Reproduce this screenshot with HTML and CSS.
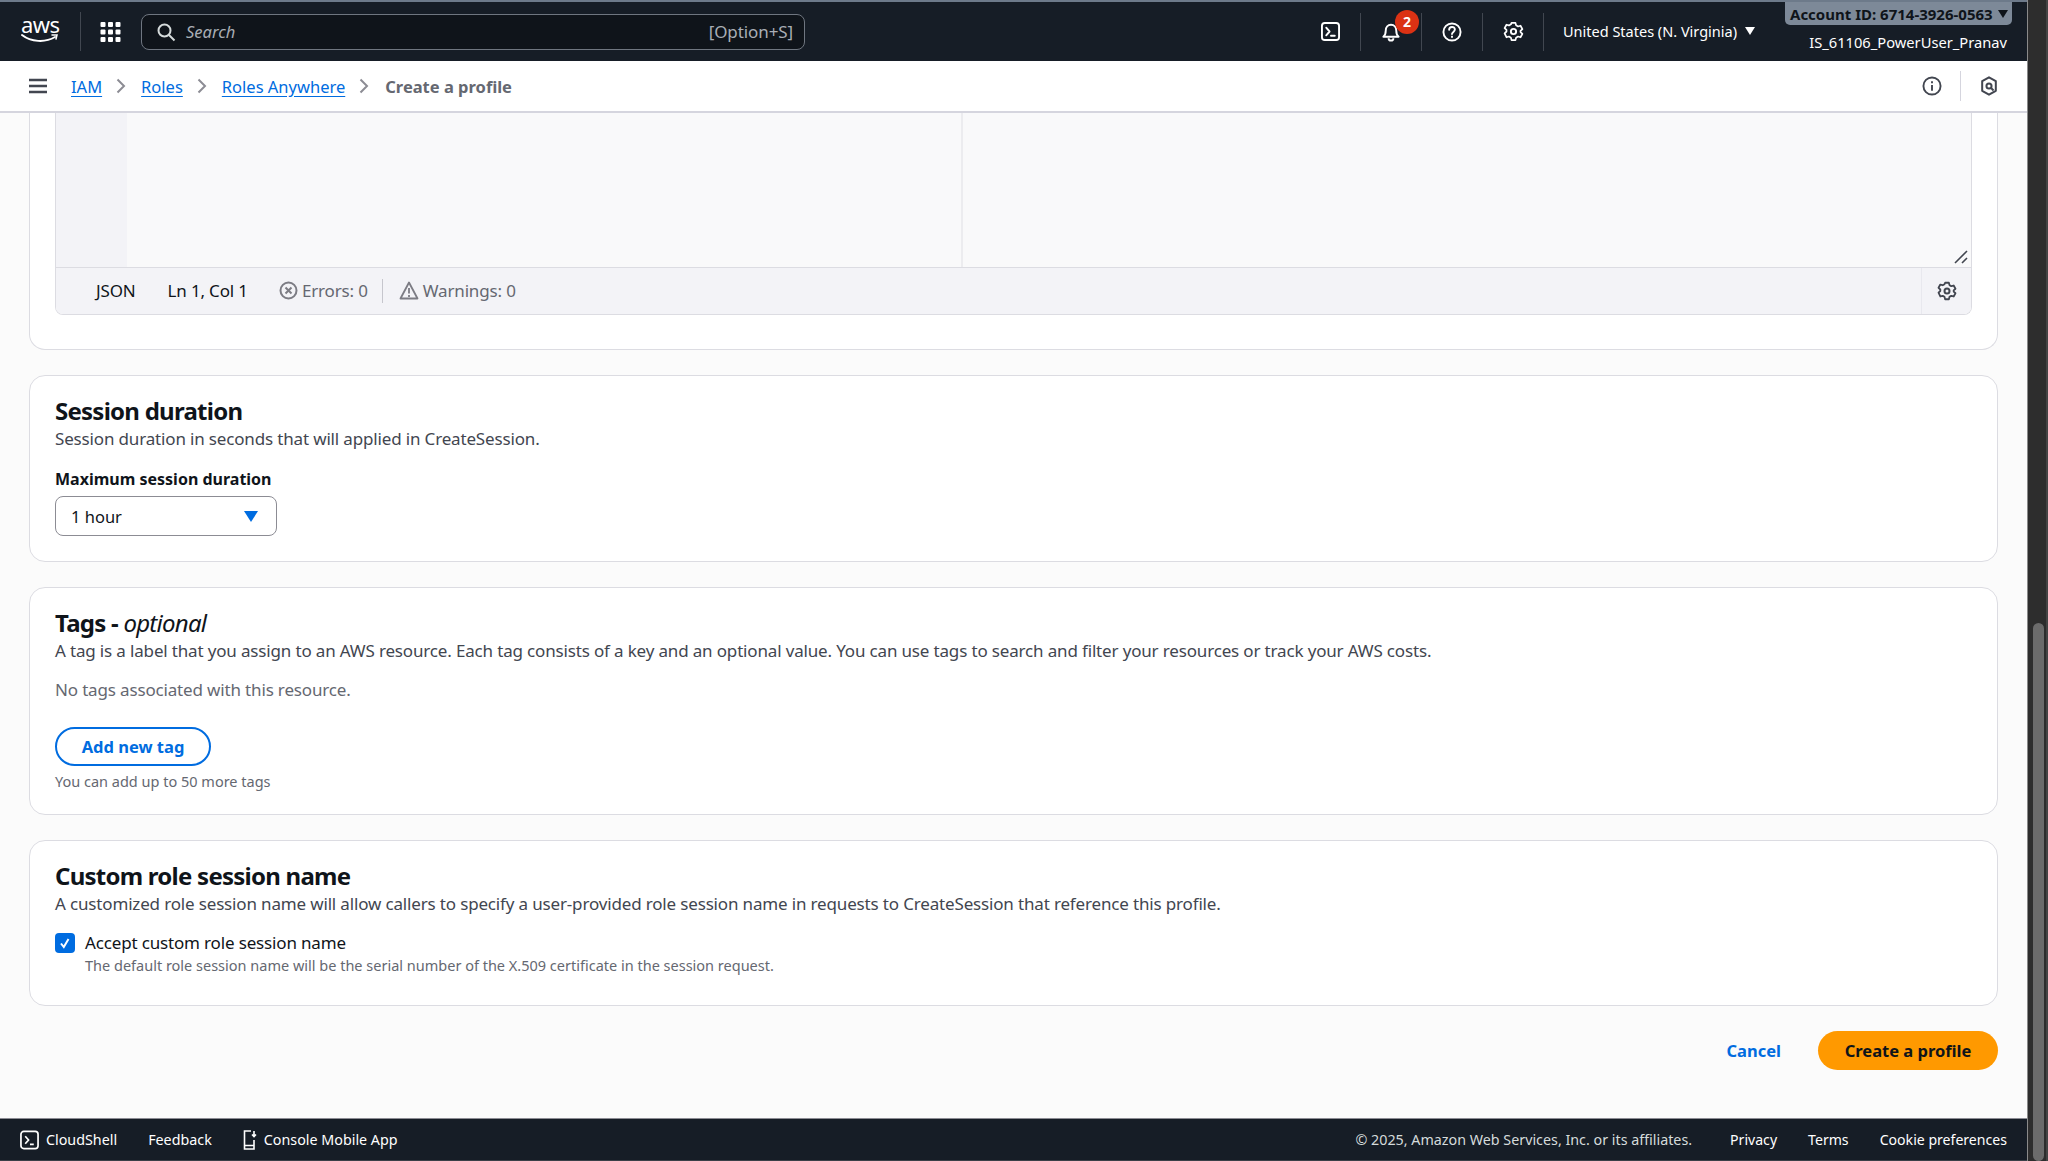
FILE: index.html
```html
<!DOCTYPE html>
<html lang="en">

<head>
    <meta charset="UTF-8">
    <title>Create a profile - Roles Anywhere</title>
    <link rel="stylesheet" href="styles.css">
</head>

<body>
    <div class="viewport">
        <!-- Top navigation -->
        <header class="topnav">
            <div class="aws-logo">
                <span class="aws-text">aws</span>
                <svg width="38" height="12" viewBox="0 0 38 12">
                    <path d="M1 2c9 7 23 8 33 2" fill="none" stroke="#fff" stroke-width="2" stroke-linecap="round"/>
                    <path d="M31 2h5l-1 4" fill="none" stroke="#fff" stroke-width="1.500" stroke-linecap="round"/>
                </svg>
            </div>
            <div class="nav-sep"></div>
            <svg class="apps-icon" width="21" height="20" viewBox="0 0 20 20" fill="#fff">
                <rect x="0" y="0" width="5" height="5" rx="1"/><rect x="7.500" y="0" width="5" height="5" rx="1"/><rect x="15" y="0" width="5" height="5" rx="1"/>
                <rect x="0" y="7.500" width="5" height="5" rx="1"/><rect x="7.500" y="7.500" width="5" height="5" rx="1"/><rect x="15" y="7.500" width="5" height="5" rx="1"/>
                <rect x="0" y="15" width="5" height="5" rx="1"/><rect x="7.500" y="15" width="5" height="5" rx="1"/><rect x="15" y="15" width="5" height="5" rx="1"/>
            </svg>
            <div class="search">
                <svg width="20" height="20" viewBox="0 0 20 20" fill="none" stroke="#d5dbdb" stroke-width="2"><circle cx="8.500" cy="8.500" r="6"/><path d="M13 13l5.500 5.500"/></svg>
                <span class="search-text">Search</span>
                <span class="search-key">[Option+S]</span>
            </div>
            <div class="nav-right">
                <div class="nav-item">
                    <svg width="19" height="19" viewBox="0 0 20 20" fill="none" stroke="#fff" stroke-width="2"><rect x="1" y="1" width="18" height="18" rx="3"/><path d="M5.500 6l3.500 4-3.500 4M10.500 14.500h4" stroke-linecap="round" stroke-linejoin="round"/></svg>
                </div>
                <div class="nav-item">
                    <svg width="20" height="21" viewBox="0 0 20 22" fill="none" stroke="#fff" stroke-width="2"><path d="M2 16.500c2-1.500 2.500-3 2.500-6.500 0-3.500 2.200-6 5.500-6s5.500 2.500 5.500 6c0 3.500.5 5 2.500 6.500z" stroke-linejoin="round"/><path d="M7.500 18a2.500 2.500 0 0 0 5 0"/></svg>
                    <span class="badge">2</span>
                </div>
                <div class="nav-item">
                    <svg width="20" height="20" viewBox="0 0 21 21" fill="none" stroke="#fff" stroke-width="2"><circle cx="10.500" cy="10.500" r="9"/><path d="M7.500 8.200c0-4 6-4 6-.2 0 2.300-3 2.500-3 4.700" stroke-linecap="round"/><path d="M10.500 14.500v2"/></svg>
                </div>
                <div class="nav-item">
                    <svg width="21" height="21" viewBox="0 0 24 24" fill="none" stroke="#fff" stroke-width="2.200"><use href="#gear-path"/></svg>
                </div>
                <div class="region">United States (N. Virginia)
                    <svg width="10" height="8" viewBox="0 0 10 8" fill="#fff"><path d="M0 0h10L5 8z"/></svg>
                </div>
                <div class="account">
                    <div class="account-id">Account ID: 6714-3926-0563
                        <svg width="10" height="8" viewBox="0 0 10 8" fill="#0f141a"><path d="M0 0h10L5 8z"/></svg>
                    </div>
                    <div class="account-user">IS_61106_PowerUser_Pranav</div>
                </div>
            </div>
        </header>

        <!-- Breadcrumbs -->
        <nav class="crumbbar">
            <svg class="menu-icon" width="18" height="16" viewBox="0 0 18 16" stroke="#424650" stroke-width="2.400"><path d="M0 2h18M0 8h18M0 14h18"/></svg>
            <a class="crumb" href="#">IAM</a>
            <svg class="chev" width="10" height="16" viewBox="0 0 10 16" fill="none" stroke="#8c8c94" stroke-width="2"><path d="M1.500 1.500L8 8l-6.500 6.500"/></svg>
            <a class="crumb" href="#">Roles</a>
            <svg class="chev" width="10" height="16" viewBox="0 0 10 16" fill="none" stroke="#8c8c94" stroke-width="2"><path d="M1.500 1.500L8 8l-6.500 6.500"/></svg>
            <a class="crumb" href="#">Roles Anywhere</a>
            <svg class="chev" width="10" height="16" viewBox="0 0 10 16" fill="none" stroke="#8c8c94" stroke-width="2"><path d="M1.500 1.500L8 8l-6.500 6.500"/></svg>
            <span class="crumb-current">Create a profile</span>
            <div class="crumb-tools">
                <svg width="20" height="20" viewBox="0 0 21 21" fill="none" stroke="#424650" stroke-width="2"><circle cx="10.500" cy="10.500" r="9"/><path d="M10.500 9.500v6M10.500 5.500v2"/></svg>
                <div class="tool-sep"></div>
                <svg width="18" height="20" viewBox="0 0 18 22" fill="none" stroke="#424650" stroke-width="2.200"><path d="M9 1.500l7.500 4.200v10.600L9 20.500l-7.500-4.200V5.700z" stroke-linejoin="round"/><circle cx="9" cy="11" r="2.800"/><path d="M11 13l3 3"/></svg>
            </div>
        </nav>

        <!-- Page content -->
        <main class="content">
            <section class="card card-editor">
                <div class="editor">
                    <div class="editor-body">
                        <div class="editor-gutter"></div>
                        <div class="editor-pane"></div>
                        <div class="editor-pane last">
                            <svg class="resize" width="14" height="14" viewBox="0 0 14 14" stroke="#424650" stroke-width="1.600"><path d="M1 13L13 1M8 13l5-5"/></svg>
                        </div>
                    </div>
                    <div class="editor-status">
                        <span class="status-lang">JSON</span>
                        <span class="status-pos">Ln 1, Col 1</span>
                        <span class="status-item status-errors">
                            <svg width="19" height="19" viewBox="0 0 19 19" fill="none" stroke="#7c7c84" stroke-width="2"><circle cx="9.500" cy="9.500" r="8"/><path d="M6.500 6.500l6 6M12.500 6.500l-6 6"/></svg>
                            Errors: 0
                        </span>
                        <span class="status-sep"></span>
                        <span class="status-item">
                            <svg width="20" height="19" viewBox="0 0 20 19" fill="none" stroke="#7c7c84" stroke-width="1.800"><path d="M10 1.500l8.500 16h-17z" stroke-linejoin="round"/><path d="M10 7v5.500M10 14v2"/></svg>
                            Warnings: 0
                        </span>
                        <span class="status-gear">
                            <svg width="20" height="20" viewBox="0 0 24 24" fill="none" stroke="#424650" stroke-width="2.400"><use href="#gear-path"/></svg>
                        </span>
                    </div>
                </div>
            </section>

            <section class="card card-session">
                <h2>Session duration</h2>
                <p class="desc">Session duration in seconds that will applied in CreateSession.</p>
                <div class="field-label">Maximum session duration</div>
                <div class="select">
                    <span>1 hour</span>
                    <svg width="14" height="11" viewBox="0 0 14 11" fill="#006ce0"><path d="M0 0h14L7 11z"/></svg>
                </div>
            </section>

            <section class="card card-tags">
                <h2>Tags - <em>optional</em></h2>
                <p class="desc">A tag is a label that you assign to an AWS resource. Each tag consists of a key and an optional value. You can use tags to search and filter your resources or track your AWS costs.</p>
                <p class="no-tags">No tags associated with this resource.</p>
                <button class="btn-outline">Add new tag</button>
                <p class="hint">You can add up to 50 more tags</p>
            </section>

            <section class="card card-custom">
                <h2>Custom role session name</h2>
                <p class="desc">A customized role session name will allow callers to specify a user-provided role session name in requests to CreateSession that reference this profile.</p>
                <div class="check-row">
                    <span class="checkbox">
                        <svg width="12" height="12" viewBox="0 0 12 12" fill="none" stroke="#fff" stroke-width="2"><path d="M2 6.500l2.800 3.500L9.500 2"/></svg>
                    </span>
                    <div>
                        <div class="check-label">Accept custom role session name</div>
                        <div class="check-hint">The default role session name will be the serial number of the X.509 certificate in the session request.</div>
                    </div>
                </div>
            </section>

            <div class="actions">
                <a class="btn-link" href="#">Cancel</a>
                <button class="btn-primary">Create a profile</button>
            </div>
        </main>

        <!-- Footer -->
        <footer class="footer">
            <span class="foot-item">
                <svg width="19" height="20" viewBox="0 0 20 20" fill="none" stroke="#fff" stroke-width="1.800"><rect x="1" y="1" width="18" height="18" rx="3"/><path d="M5.500 6l3.500 4-3.500 4M10.500 14.500h4"/></svg>
                CloudShell
            </span>
            <span class="foot-item">Feedback</span>
            <span class="foot-item">
                <svg width="14" height="20" viewBox="0 0 14 20" fill="none" stroke="#fff" stroke-width="1.600"><path d="M8 1H1.500v18h9.500v-9M1.500 15.500H11"/><path d="M11 1v5M9 4.500l2 2 2-2"/></svg>
                Console Mobile App
            </span>
            <div class="foot-right">
                <span class="copyright">© 2025, Amazon Web Services, Inc. or its affiliates.</span>
                <span>Privacy</span>
                <span>Terms</span>
                <span>Cookie preferences</span>
            </div>
        </footer>
    </div>

    <!-- Scrollbar from the screenshot -->
    <div class="scrollbar"><div class="scroll-thumb"></div></div>

    <svg class="defs" width="0" height="0">
        <defs>
            <g id="gear-path">
                <circle cx="12" cy="12" r="3"/>
                <path d="M9.500 2h5l.8 3.200 2.400 1.400 3.200-.9 2.400 4.300-2.400 2.300v1.400l2.400 2.300-2.400 4.300-3.200-.9-2.400 1.400-.8 3.200h-5l-.8-3.200-2.400-1.400-3.200.9L.7 15.300l2.400-2.300v-2L.7 8.700 3.100 4.400l3.200.9 2.400-1.400z" transform="translate(12 12) scale(.9) translate(-12 -13)" stroke-linejoin="round"/>
            </g>
        </defs>
    </svg>
</body>

</html>
```

FILE: styles.css
```css
/* Base */
html, body {
    margin: 0;
    padding: 0;
    height: 100%;
    overflow: hidden;
    background-color: #fbfbfb;
    font-family: "Noto Sans", "Open Sans", sans-serif;
    color: #0f141a;
}

body {
    display: flex;
}

.viewport {
    flex: 1;
    height: 1161px;
    display: flex;
    flex-direction: column;
    min-width: 0;
}

.defs {
    position: absolute;
}

/* Top navigation */
.topnav {
    height: 59px;
    border-top: 2px solid #6d7a8a;
    background-color: #161d26;
    display: flex;
    align-items: center;
    color: #fff;
    font-size: 14.500px;
    flex-shrink: 0;
}

.aws-logo {
    width: 38px;
    margin: -7px 0 0 21px;
    display: flex;
    flex-direction: column;
}

.aws-logo svg {
    margin-top: -3px;
}

.aws-text {
    font-size: 22px;
    line-height: 24px;
    letter-spacing: -0.6px;
    color: #fff;
}

.nav-sep {
    width: 1px;
    height: 39px;
    background-color: #414750;
    margin-left: 21px;
}

.apps-icon {
    margin-left: 19px;
}

.search {
    width: 664px;
    height: 36px;
    margin-left: 20px;
    border: 1.500px solid #6f7680;
    border-radius: 8px;
    background-color: #0f141a;
    display: flex;
    align-items: center;
    padding: 0 11px 0 14px;
    color: #a9aeb5;
    box-sizing: border-box;
}

.search-text {
    margin-left: 10px;
    font-style: italic;
    font-size: 16.500px;
}

.search-key {
    margin-left: auto;
    font-size: 17px;
    letter-spacing: -0.1px;
}

.nav-right {
    margin-left: auto;
    display: flex;
    align-items: center;
    height: 100%;
}

.nav-item {
    position: relative;
    width: 61px;
    height: 38px;
    box-sizing: border-box;
    display: flex;
    align-items: center;
    justify-content: center;
    border-right: 1px solid #414750;
}

.badge {
    position: absolute;
    top: -3px;
    right: 2px;
    width: 24px;
    height: 24px;
    border-radius: 50%;
    background-color: #db3214;
    color: #fff;
    font-size: 14px;
    font-weight: 700;
    line-height: 24px;
    text-align: center;
}

.region {
    width: 246px;
    padding: 0 0 2px 19px;
    box-sizing: border-box;
    display: flex;
    align-items: center;
    gap: 8px;
    white-space: nowrap;
}

.account {
    width: 237px;
    position: relative;
    align-self: stretch;
    text-align: right;
    padding-right: 20px;
    box-sizing: border-box;
    white-space: nowrap;
}

.account-id {
    position: absolute;
    top: 0;
    right: 15px;
    width: 227px;
    box-sizing: border-box;
    height: 23px;
    padding-left: 5px;
    border-radius: 0 0 5px 5px;
    background-color: #7d8998;
    color: #0f141a;
    font-weight: 700;
    font-size: 15px;
    display: flex;
    align-items: center;
    gap: 5px;
}

.account-user {
    margin-top: 31px;
    font-size: 14.700px;
    line-height: 18px;
}

/* Breadcrumbs */
.crumbbar {
    height: 50px;
    background-color: #fff;
    border-bottom: 2px solid #d5d5de;
    display: flex;
    align-items: center;
    padding: 0 29px;
    font-size: 16.500px;
    flex-shrink: 0;
}

.menu-icon {
    margin-right: 24px;
}

.crumb {
    color: #006ce0;
    text-decoration: underline;
    text-underline-offset: 3px;
}

.chev {
    margin: 0 15px 0 14px;
}

.crumb-current {
    color: #656871;
    font-weight: 700;
    margin-left: 1px;
}

.crumb-tools {
    margin-left: auto;
    display: flex;
    align-items: center;
}

.tool-sep {
    width: 1px;
    height: 30px;
    background-color: #d5d5de;
    margin: 0 19px 0 18px;
}

/* Content */
.content {
    flex: 1;
    display: flex;
    flex-direction: column;
    gap: 25px;
    padding: 0 29px;
    min-height: 0;
}

.card {
    background-color: #fff;
    border: 1px solid #dcdce2;
    border-radius: 16px;
    padding: 20px 25px;
    box-sizing: border-box;
    flex-shrink: 0;
}

.card-editor {
    border-top: 0;
    border-top-left-radius: 0;
    border-top-right-radius: 0;
    height: 237px;
    padding: 0 25px;
}

.card-session {
    height: 187px;
}

.card-tags {
    height: 228px;
}

.card-custom {
    height: 166px;
}

h2 {
    margin: 0;
    font-size: 24px;
    line-height: 30px;
    font-weight: 700;
    letter-spacing: -0.75px;
}

h2 em {
    font-weight: 400;
}

.desc {
    margin: 1px 0 0;
    font-size: 17px;
    letter-spacing: -0.16px;
    line-height: 24px;
    color: #424650;
}

/* Code editor */
.editor {
    height: 202px;
    border: 1px solid #dcdce2;
    border-top: 0;
    border-radius: 0 0 8px 8px;
    box-sizing: border-box;
    display: flex;
    flex-direction: column;
    overflow: hidden;
}

.editor-body {
    flex: 1;
    display: flex;
    background-color: #f9f9fa;
}

.editor-gutter {
    width: 71px;
    background-color: #f3f3f7;
}

.editor-pane {
    width: 834px;
    position: relative;
}

.editor-pane.last {
    width: auto;
    flex: 1;
    border-left: 2px solid #ececef;
}

.resize {
    position: absolute;
    right: 3px;
    bottom: 3px;
}

.editor-status {
    height: 47px;
    box-sizing: border-box;
    background-color: #f3f3f7;
    border-top: 1px solid #dcdce2;
    display: flex;
    align-items: center;
    padding-left: 40px;
    font-size: 17px;
    letter-spacing: -0.16px;
}

.status-lang,
.status-pos,
.status-item {
    margin-bottom: 2px;
}

.status-pos {
    margin-left: 32px;
}

.status-item {
    display: flex;
    align-items: center;
    gap: 4px;
    color: #656871;
}

.status-errors {
    margin-left: 31px;
}

.status-sep {
    width: 1px;
    height: 24px;
    background-color: #c6c6cd;
    margin: 0 16px 0 14px;
}

.status-gear {
    margin-left: auto;
    width: 49px;
    height: 100%;
    display: flex;
    align-items: center;
    justify-content: center;
    border-left: 1px solid #e8e8ee;
}

/* Form pieces */
.field-label {
    margin-top: 16px;
    font-size: 16px;
    line-height: 24px;
    font-weight: 700;
}

.select {
    margin-top: 5px;
    width: 222px;
    height: 40px;
    box-sizing: border-box;
    border: 1px solid #8c8c94;
    border-radius: 8px;
    display: flex;
    align-items: center;
    justify-content: space-between;
    padding: 0 18px 0 15px;
    font-size: 16.500px;
}

.no-tags {
    margin: 15px 0 0;
    font-size: 17px;
    letter-spacing: -0.16px;
    line-height: 24px;
    color: #656871;
}

.btn-outline {
    display: block;
    margin-top: 25px;
    width: 156px;
    height: 39px;
    border: 2px solid #006ce0;
    border-radius: 20px;
    background-color: #fff;
    color: #006ce0;
    font-family: inherit;
    font-size: 16.500px;
    font-weight: 700;
    padding: 0;
}

.hint {
    margin: 5px 0 0;
    font-size: 14.500px;
    line-height: 20px;
    color: #656871;
}

.check-row {
    display: flex;
    gap: 10px;
    margin-top: 15px;
}

.checkbox {
    width: 20px;
    height: 20px;
    margin-top: 2px;
    border-radius: 4px;
    background-color: #006ce0;
    display: flex;
    align-items: center;
    justify-content: center;
    flex-shrink: 0;
}

.check-label {
    font-size: 17px;
    letter-spacing: -0.16px;
    line-height: 24px;
}

.check-hint {
    font-size: 14.500px;
    line-height: 20px;
    color: #656871;
}

.actions {
    display: flex;
    justify-content: flex-end;
    align-items: center;
    gap: 37px;
    flex-shrink: 0;
}

.btn-link {
    color: #006ce0;
    font-size: 16.500px;
    font-weight: 700;
    text-decoration: none;
}

.btn-primary {
    width: 180px;
    height: 39px;
    border: 0;
    border-radius: 20px;
    background-color: #ff9900;
    color: #0f141a;
    font-family: inherit;
    font-size: 16.500px;
    font-weight: 700;
}

/* Footer */
.footer {
    height: 43px;
    box-sizing: border-box;
    background-color: #161d26;
    border-top: 1px solid #8c8c94;
    border-bottom: 1px solid #3a4048;
    display: flex;
    align-items: center;
    padding: 0 20px;
    color: #fff;
    font-size: 14.300px;
    flex-shrink: 0;
}

.foot-item {
    display: flex;
    align-items: center;
    gap: 7px;
    margin-right: 31px;
}

.foot-right {
    margin-left: auto;
    display: flex;
    gap: 31px;
    font-size: 14.100px;
}

.copyright {
    color: #d5dbdb;
    font-size: 14.300px;
    margin-right: 7px;
}

/* Scrollbar */
.scrollbar {
    width: 21px;
    height: 1161px;
    box-sizing: border-box;
    background-color: #2d2d2d;
    border-left: 1px solid #8a8a8a;
    border-right: 2px solid #444;
    flex-shrink: 0;
}

.scroll-thumb {
    width: 11px;
    height: 538px;
    margin: 623px 0 0 5px;
    border-radius: 6px;
    background-color: #6b6b6b;
}
```
